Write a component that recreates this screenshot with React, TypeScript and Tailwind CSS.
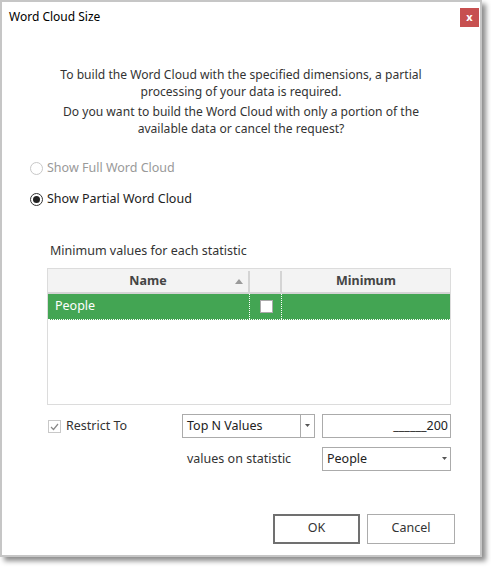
import React from "react";

export default function App() {
  return (
    <div className="w-[491px] h-[567px] bg-white relative" style={{ fontFamily: '"Noto Sans", "Open Sans", sans-serif' }}>
      <div className="w-[482px] h-[557px] border-2 border-[#c6c6c6] bg-white shadow-[4px_4px_5px_rgba(0,0,0,0.45)] flex flex-col text-[12.5px] text-[#333]">
        {/* title bar */}
        <div className="flex items-start justify-between h-[56px]">
          <div className="pl-[7px] pt-[6px] text-[12px] text-black">Word Cloud Size</div>
          <div className="mt-[6px] mr-[1px] w-[19px] h-[19px] bg-[#c75050] text-white text-[11px] font-bold flex items-center justify-center leading-none pb-[2px]">x</div>
        </div>
        {/* message */}
        <div className="text-center text-[12.1px] leading-[17px] text-[#333] px-[20px] pt-[8px] flex flex-col gap-[3px]">
          <div>
            <div>To build the Word Cloud with the specified dimensions, a partial</div>
            <div>processing of your data is required.</div>
          </div>
          <div>
            <div>Do you want to build the Word Cloud with only a portion of the</div>
            <div>available data or cancel the request?</div>
          </div>
        </div>
        {/* radios */}
        <div className="pl-[28px] mt-[21px] flex flex-col gap-[11px]">
          <div className="flex items-center gap-[4px] h-[20px] text-[#999]">
            <span className="w-[13px] h-[13px] rounded-full border border-[#c8c8c8] bg-white" />
            <span>Show Full Word Cloud</span>
          </div>
          <div className="flex items-center gap-[4px] h-[20px] text-[#222]">
            <span className="w-[13px] h-[13px] rounded-full border border-[#333] bg-white flex items-center justify-center">
              <span className="w-[7px] h-[7px] rounded-full bg-[#222]" />
            </span>
            <span>Show Partial Word Cloud</span>
          </div>
        </div>
        {/* minimum values */}
        <div className="pl-[48px] mt-[33px] text-[#333]">Minimum values for each statistic</div>
        <div className="ml-[45px] mt-[7px] w-[404px] h-[137px] border border-[#dcdcdc] flex flex-col">
          <div className="flex h-[25px] bg-[#f3f3f3] border-b-2 border-[#d4d4d4] font-bold text-[#444] pt-[2px]">
            <div className="w-[202px] border-r-2 border-[#d4d4d4] relative flex items-center justify-center">
              Name
              <svg className="absolute right-[5px] top-[8px]" width="8" height="5" viewBox="0 0 8 5">
                <path d="M0 5 L4 0 L8 5 Z" fill="#9a9a9a" />
              </svg>
            </div>
            <div className="w-[32px] border-r-2 border-[#d4d4d4]" />
            <div className="flex-1 flex items-center justify-center">Minimum</div>
          </div>
          <div className="flex h-[26px] bg-[#43a553] text-white border-b border-dotted border-white">
            <div className="w-[202px] border-r border-dotted border-white flex items-center pl-[7px] pt-[1px]">People</div>
            <div className="w-[32px] border-r border-dotted border-white flex items-center justify-center pl-[1px]">
              <span className="w-[13px] h-[13px] bg-white border border-[#aaa]" />
            </div>
            <div className="flex-1" />
          </div>
          <div className="flex-1" />
        </div>
        {/* restrict row */}
        <div className="flex items-center mt-[9px] h-[24px]">
          <div className="ml-[46px] w-[134px] flex items-center gap-[5px] text-[#333] pt-[2px]">
            <span className="w-[13px] h-[13px] border border-[#c8c8c8] bg-white flex items-center justify-center">
              <svg width="9" height="8" viewBox="0 0 9 8">
                <path d="M1 4 L3.5 6.5 L8 1" stroke="#888" strokeWidth="1.2" fill="none" />
              </svg>
            </span>
            <span>Restrict To</span>
          </div>
          <div className="w-[133px] h-[24px] border border-[#ababab] flex">
            <div className="flex-1 flex items-center pl-[4px] pt-[1px] text-[#222]">Top N Values</div>
            <div className="w-[14px] border-l border-[#ababab] flex items-center justify-center">
              <svg width="5" height="3" viewBox="0 0 5 3"><path d="M0 0 L5 0 L2.5 3 Z" fill="#555" /></svg>
            </div>
          </div>
          <div className="ml-[7px] w-[129px] h-[24px] border border-[#ababab] flex items-center justify-end pr-[2px] pt-[1px] text-[#222]">______200</div>
        </div>
        <div className="flex items-center mt-[9px] h-[24px]">
          <div className="ml-[185px] w-[135px] text-[#333] pt-[1px]">values on statistic</div>
          <div className="w-[129px] h-[24px] border border-[#ababab] flex">
            <div className="flex-1 flex items-center pl-[4px] pt-[2px] text-[#222]">People</div>
            <div className="w-[12px] flex items-center justify-center">
              <svg width="5" height="3" viewBox="0 0 5 3"><path d="M0 0 L5 0 L2.5 3 Z" fill="#555" /></svg>
            </div>
          </div>
        </div>
        {/* buttons */}
        <div className="flex mt-[43px] ml-[271px] gap-[7px]">
          <div className="w-[87px] h-[30px] border-2 border-[#707070] flex items-center justify-center text-[#333]">OK</div>
          <div className="w-[88px] h-[30px] border border-[#acacac] flex items-center justify-center text-[#333]">Cancel</div>
        </div>
      </div>
    </div>
  );
}
